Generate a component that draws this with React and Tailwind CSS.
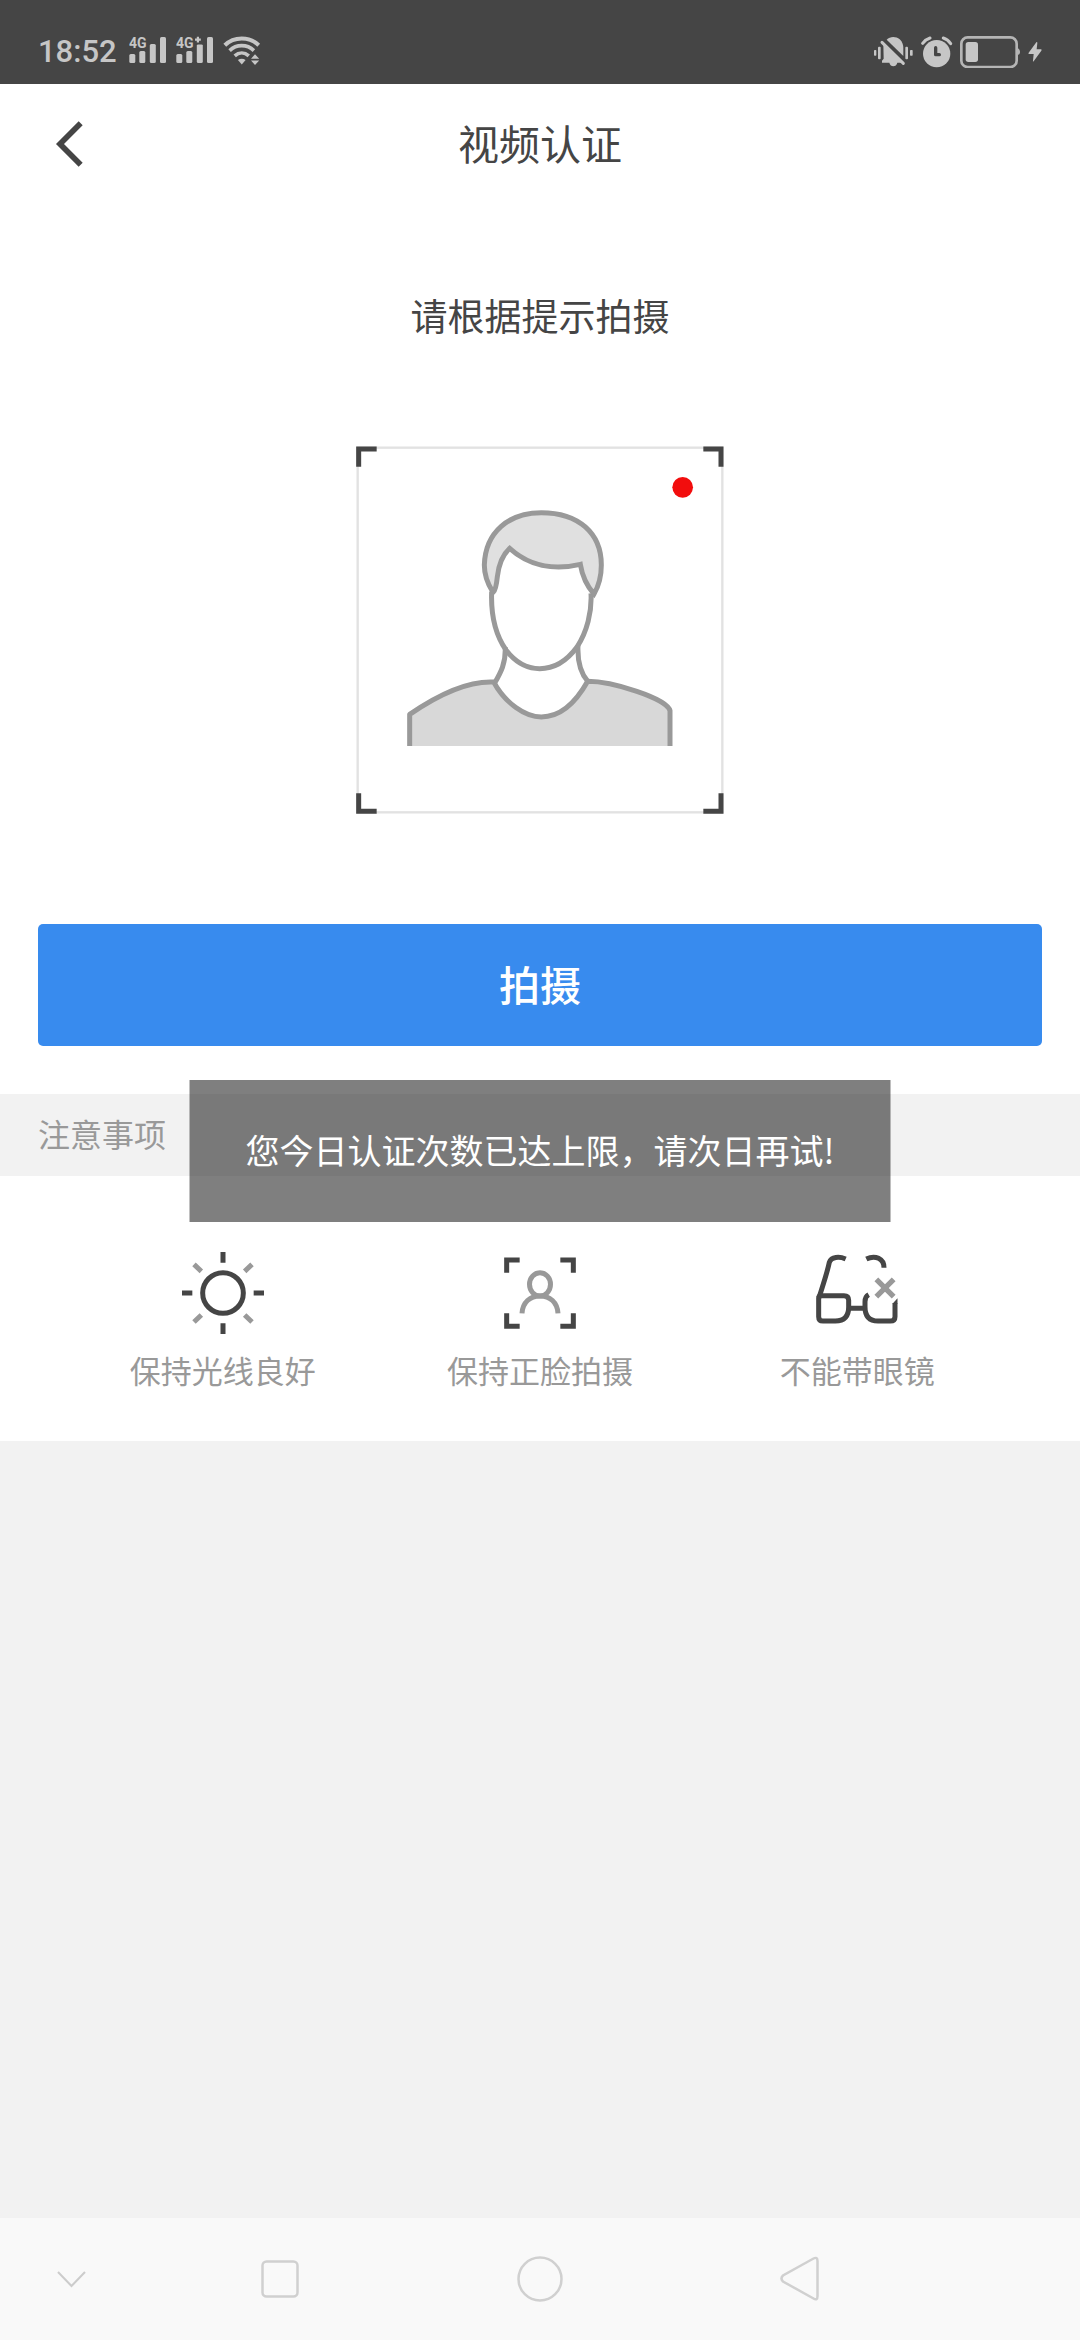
import React from "react";

function SignalIcon({ label, plus }) {
  return (
    <svg className="h-[30px] w-[39px]" viewBox="0 0 39 30" fill="#c6c6c6" aria-hidden="true">
      <text x="0" y="12" fontFamily="Roboto, sans-serif" fontWeight="700" fontSize="14">
        {label}
      </text>
      <rect x="0.3" y="18" width="6" height="9" rx="1.5" />
      <rect x="10.3" y="15" width="6" height="12" rx="1.5" />
      <rect x="20.8" y="8" width="6" height="19" rx="1.5" />
      {plus && <path d="M18.500 0H29V8.500H18.500Z" fill="#454545" />}
      {plus && <path d="M21.900 0.800v5.800M19 3.700h5.800" stroke="#c6c6c6" strokeWidth="2.200" />}
      <rect x="31" y="1" width="6" height="26" rx="1.5" />
    </svg>
  );
}

function WifiIcon() {
  return (
    <svg className="h-8 w-[38px]" viewBox="0 0 38 32" fill="none" stroke="#c6c6c6" aria-hidden="true">
      <path d="M1.8 10.2C11 1.2 26.500 1.200 35.700 10.200" strokeWidth="4" />
      <path d="M6.600 15.600C13.500 9 24 9 30.900 15.600" strokeWidth="3.600" />
      <path d="M11.700 20.800C16 17 21.500 17 25.800 20.800" strokeWidth="3.600" />
      <path d="M14.900 25Q18.800 22.500 22.600 25L18.800 29.500Z" fill="#c6c6c6" stroke="none" />
      <path d="M28 23.700L32 19.200L36.200 23.700ZM28 25.600L32 30.100L36.200 25.600Z" fill="#c6c6c6" stroke="none" />
    </svg>
  );
}

function MuteIcon() {
  return (
    <svg className="h-8 w-10" viewBox="0 0 120 96" fill="#c6c6c6" aria-hidden="true">
      <rect x="0" y="42" width="7" height="17" rx="2" />
      <rect x="12" y="32" width="8" height="38" rx="3" />
      <rect x="94" y="32" width="8" height="38" rx="3" />
      <rect x="108" y="42" width="8" height="17" rx="2" />
      <path d="M38 11C48 1 66 1 77 10C86 18 88 28 88 38V60Z" />
      <path d="M28 24L84 80H70C67 94 49 94 46 80H24V74L29 68Z" />
      <path d="M24 19L88 82" stroke="#c6c6c6" strokeWidth="9" strokeLinecap="round" />
    </svg>
  );
}

function AlarmIcon() {
  return (
    <svg className="h-8 w-8" viewBox="0 0 96 96" fill="none" aria-hidden="true">
      <circle cx="47" cy="53" r="41" fill="#c6c6c6" />
      <path d="M5 22Q14 10 27 6M67 6Q80 10 89 23" stroke="#c6c6c6" strokeWidth="9" strokeLinecap="round" />
      <path d="M44 35V56H55" stroke="#454545" strokeWidth="10" strokeLinecap="round" strokeLinejoin="round" />
    </svg>
  );
}

function BatteryIcon() {
  return (
    <svg className="h-8 w-[61px]" viewBox="0 0 183 96" fill="none" aria-hidden="true">
      <rect x="4" y="4" width="166" height="89" rx="19" stroke="#b5b5b5" strokeWidth="8" />
      <rect x="17" y="18" width="37" height="60" rx="8" fill="#c6c6c6" />
      <path d="M171 35C177 37 180 42 180 48S177 56 171 58Z" fill="#b5b5b5" />
    </svg>
  );
}

function BoltIcon() {
  return (
    <svg className="h-5 w-[14px]" viewBox="0 0 42 60" fill="#c6c6c6" aria-hidden="true">
      <path d="M25 1Q28 -1 28 3L26 22H39Q42 23 40 26L17 58Q14 60 15 56L17 36H3Q0 35 2 32Z" />
    </svg>
  );
}

function StatusBar() {
  return (
    <div className="flex h-[84px] items-end justify-between bg-[#454545] px-[38px] pb-4">
      <div className="flex items-center">
        <span className="w-[91px] pt-0.5 font-['Roboto',sans-serif] text-[31px] leading-8 font-medium text-[#c6c6c6]">
          18:52
        </span>
        <div className="flex items-center gap-2">
          <SignalIcon label="4G" />
          <SignalIcon label="4G" plus />
          <WifiIcon />
        </div>
      </div>
      <div className="flex items-center gap-[7px]">
        <MuteIcon />
        <AlarmIcon />
        <BatteryIcon />
        <BoltIcon />
      </div>
    </div>
  );
}

function PortraitFrame() {
  return (
    <svg
      className="mt-[103px] h-[368px] w-[368px]"
      viewBox="52 48 1104 1104"
      fill="none"
      stroke="#999"
      strokeWidth="15"
      role="img"
      aria-label="人像取景框"
    >
      <rect x="57" y="53" width="1094" height="1094" stroke="#e2e2e2" strokeWidth="7" />
      <path
        d="M60 110V57H114M1094 57H1147V110M60 1090V1144H114M1094 1144H1147V1090"
        stroke="#454545"
      />
      <circle cx="1032" cy="172" r="31" fill="#f20d0d" stroke="none" />
      <path
        d="M213 948V853C290 800 380 752 465 756C500 820 560 861 608 861C665 861 710 820 747 754C820 754 985 805 994 842V948"
        fill="#d8d8d8"
        strokeLinejoin="round"
      />
      <path d="M500 652C501 700 487 727 468 759M718 645C716 690 724 728 748 755" />
      <path d="M459 485C456 560 473 618 502 660C530 697 567 716 603 716C645 716 685 692 715 651C745 605 760 545 757 490" />
      <path
        d="M462 485C443 455 437 430 437 405C440 305 512 248 608 248C720 248 788 310 788 405C788 440 780 468 766 492C744 467 731 440 725 403C645 422 570 407 513 355C491 375 480 405 476 440C474 460 472 478 464 486Z"
        fill="#e0e0e0"
      />
    </svg>
  );
}

function SunIcon() {
  return (
    <svg className="h-[82px] w-[82px]" viewBox="0 0 246 246" fill="none" strokeWidth="15" stroke="#454545" aria-hidden="true">
      <circle cx="123" cy="123" r="61" />
      <path d="M123 0V32M123 214V246M0 123H31M215 123H246" />
      <path d="M36 37L58 58M210 37L188 58M36 210L58 189M210 210L188 189" stroke="#999" />
    </svg>
  );
}

function FaceIcon() {
  return (
    <svg className="h-[82px] w-[82px]" viewBox="0 0 246 246" fill="none" strokeWidth="15" stroke="#454545" aria-hidden="true">
      <path d="M23 62V24H62M184 24H223V62M23 184V223H62M184 223H223V184" />
      <ellipse cx="123" cy="97" rx="31.500" ry="35" stroke="#999" />
      <path d="M69 184C71 151 93 132 123 132S175 151 177 184" stroke="#999" />
    </svg>
  );
}

function GlassesIcon() {
  return (
    <svg className="h-[82px] w-[82px]" viewBox="0 0 246 246" fill="none" strokeWidth="15" stroke="#454545" aria-hidden="true">
      <path d="M89 21C70 13 46 14 40 31C34 61 19 105 9 137" />
      <path d="M9 131H84Q98 131 98 145V165Q98 207 58 207H21Q8 207 8 194V138Q8 131 15 131" />
      <path d="M99 169H144M158 128Q147 134 147 149V164Q147 207 186 207H223Q237 207 237 194V153" />
      <path d="M151 21C178 8 204 20 204 47" />
      <path d="M229.500 155L244.500 139V155Z" fill="#454545" stroke="none" />
      <path d="M181 82L233 134M233 82L181 134" stroke="#999" strokeWidth="16" />
    </svg>
  );
}

const tips = [
  { label: "保持光线良好", Icon: SunIcon },
  { label: "保持正脸拍摄", Icon: FaceIcon },
  { label: "不能带眼镜", Icon: GlassesIcon },
];

function Toast() {
  return (
    <div
      role="status"
      className="absolute top-[-14px] left-1/2 flex h-[142px] -translate-x-1/2 items-center bg-black/50 px-14 pb-0.5 text-[34px] leading-[48px] whitespace-nowrap text-white"
    >
      您今日认证次数已达上限，请次日再试!
    </div>
  );
}

function NavBar() {
  return (
    <nav className="mt-auto grid h-[122px] grid-cols-[150px_1fr_1fr_1fr_150px] items-center justify-items-center bg-[#f9f9f9]">
      <button type="button" aria-label="收起" className="pr-2">
        <svg className="h-12 w-12" viewBox="0 0 48 48" fill="none" stroke="#ccc" strokeWidth="2">
          <path d="M11 17L24.500 31L38 17" />
        </svg>
      </button>
      <button type="button" aria-label="最近任务">
        <svg className="h-12 w-12" viewBox="0 0 48 48" fill="none" stroke="#d0d0d0" strokeWidth="2.500">
          <rect x="6.500" y="6.500" width="35" height="35" rx="4" />
        </svg>
      </button>
      <button type="button" aria-label="主屏幕">
        <svg className="h-12 w-12" viewBox="0 0 48 48" fill="none" stroke="#d0d0d0" strokeWidth="2.500">
          <circle cx="24" cy="24" r="21.500" />
        </svg>
      </button>
      <button type="button" aria-label="返回上一页">
        <svg className="h-12 w-12" viewBox="0 0 48 48" fill="none" stroke="#d0d0d0" strokeWidth="2.500">
          <path d="M37.500 3.500Q41.500 1.500 41.500 6V41Q41.500 46 37.500 43.500L7 26.500Q4 23.500 7 20.500Z" />
        </svg>
      </button>
    </nav>
  );
}

export default function App() {
  return (
    <div className="flex min-h-screen flex-col bg-[#f2f2f2] font-['Noto_Sans_CJK_SC',sans-serif] text-[#454545]">
      <StatusBar />
      <header className="grid h-[120px] grid-cols-[1fr_auto_1fr] items-center bg-white px-[38px]">
        <button type="button" aria-label="返回" className="justify-self-start">
          <svg className="h-12 w-12" viewBox="0 0 144 144" fill="none" stroke="#454545" strokeWidth="17">
            <path d="M128 10L66 72L128 134" />
          </svg>
        </button>
        <h1 className="pb-1 text-[41px] leading-[60px]">视频认证</h1>
      </header>
      <main>
        <section className="flex flex-col items-center bg-white px-[38px] pt-[83px] pb-12">
          <p className="text-[37px] leading-[56px]">请根据提示拍摄</p>
          <PortraitFrame />
          <button
            type="button"
            className="mt-[110px] h-[122px] w-full rounded-[5px] bg-[#388bee] pb-1 text-[41px] leading-[60px] font-medium text-white"
          >
            拍摄
          </button>
        </section>
        <section className="relative">
          <h2 className="flex h-[82px] items-center px-[38px] pb-1 text-[32px] leading-[46px] text-[#999]">
            注意事项
          </h2>
          <ul className="grid grid-cols-3 bg-white px-16 pt-[76px] pb-12">
            {tips.map(({ label, Icon }) => (
              <li key={label} className="flex flex-col items-center gap-[13px]">
                <Icon />
                <span className="text-[31px] leading-[46px] text-[#999]">{label}</span>
              </li>
            ))}
          </ul>
          <Toast />
        </section>
      </main>
      <NavBar />
    </div>
  );
}
